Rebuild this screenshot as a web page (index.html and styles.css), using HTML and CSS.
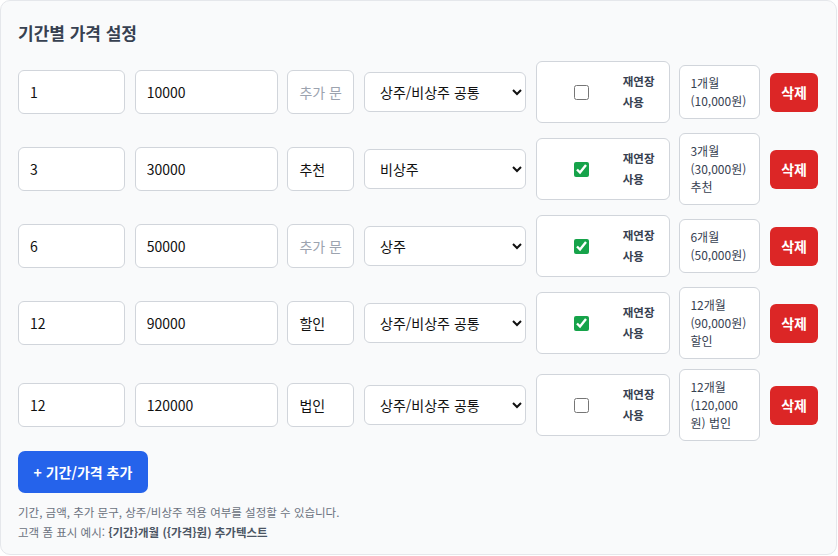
FILE: index.html
```html
<!DOCTYPE html>
<html lang="ko">
<head>
  <meta charset="UTF-8" />
  <title>기간별 가격 설정</title>
  <link rel="stylesheet" href="styles.css">
</head>
<body>
  <div class="panel">
    <h3>기간별 가격 설정</h3>

    <div class="rows">
      <div class="row">
        <input class="months" type="text" value="1" />
        <input class="price" type="text" value="10000" />
        <input class="extra" type="text" placeholder="추가 문구" />
        <select class="scope">
          <option selected>상주/비상주 공통</option>
          <option>상주</option>
          <option>비상주</option>
        </select>
        <label class="renew">
          <span class="check"><input type="checkbox" /></span>
          <span class="renew-text">재연장 사용</span>
        </label>
        <div class="preview">1개월 (10,000원)</div>
        <button class="del">삭제</button>
      </div>

      <div class="row">
        <input class="months" type="text" value="3" />
        <input class="price" type="text" value="30000" />
        <input class="extra" type="text" placeholder="추가 문구" value="추천" />
        <select class="scope">
          <option>상주/비상주 공통</option>
          <option>상주</option>
          <option selected>비상주</option>
        </select>
        <label class="renew">
          <span class="check"><input type="checkbox" checked /></span>
          <span class="renew-text">재연장 사용</span>
        </label>
        <div class="preview">3개월 (30,000원) 추천</div>
        <button class="del">삭제</button>
      </div>

      <div class="row">
        <input class="months" type="text" value="6" />
        <input class="price" type="text" value="50000" />
        <input class="extra" type="text" placeholder="추가 문구" />
        <select class="scope">
          <option>상주/비상주 공통</option>
          <option selected>상주</option>
          <option>비상주</option>
        </select>
        <label class="renew">
          <span class="check"><input type="checkbox" checked /></span>
          <span class="renew-text">재연장 사용</span>
        </label>
        <div class="preview">6개월 (50,000원)</div>
        <button class="del">삭제</button>
      </div>

      <div class="row">
        <input class="months" type="text" value="12" />
        <input class="price" type="text" value="90000" />
        <input class="extra" type="text" placeholder="추가 문구" value="할인" />
        <select class="scope">
          <option selected>상주/비상주 공통</option>
          <option>상주</option>
          <option>비상주</option>
        </select>
        <label class="renew">
          <span class="check"><input type="checkbox" checked /></span>
          <span class="renew-text">재연장 사용</span>
        </label>
        <div class="preview">12개월 (90,000원) 할인</div>
        <button class="del">삭제</button>
      </div>

      <div class="row">
        <input class="months" type="text" value="12" />
        <input class="price" type="text" value="120000" />
        <input class="extra" type="text" placeholder="추가 문구" value="법인" />
        <select class="scope">
          <option selected>상주/비상주 공통</option>
          <option>상주</option>
          <option>비상주</option>
        </select>
        <label class="renew">
          <span class="check"><input type="checkbox" /></span>
          <span class="renew-text">재연장 사용</span>
        </label>
        <div class="preview">12개월 (120,000원) 법인</div>
        <button class="del">삭제</button>
      </div>

      <div>
        <button class="add">+ 기간/가격 추가</button>
      </div>
    </div>

    <p class="help">
      기간, 금액, 추가 문구, 상주/비상주 적용 여부를 설정할 수 있습니다.<br />
      고객 폼 표시 예시: <b>{기간}개월 ({가격}원) 추가텍스트</b>
    </p>
  </div>
</body>
</html>
```

FILE: styles.css
```css
body {
  margin: 0;
  background: #fff;
  font-family: "Noto Sans CJK KR", "Noto Sans", sans-serif;
  color: #111;
}

.panel {
  width: 837px;
  box-sizing: border-box;
  background: #f9fafb;
  border: 1px solid #e5e7eb;
  border-radius: 10px;
  padding: 19px 15px 12px 17px;
}

h3 {
  margin: 0 0 16px;
  font-size: 17px;
  line-height: 25px;
  font-weight: 700;
  color: #374151;
}

.rows {
  display: flex;
  flex-direction: column;
  gap: 10px;
}

.row {
  display: flex;
  align-items: center;
  gap: 9.7px;
}

.row > * {
  flex-shrink: 0;
}

input[type="text"], select {
  font: inherit;
  font-size: 14px;
  color: #111;
  background: #fff;
  border: 1px solid #d1d5db;
  border-radius: 6px;
  box-sizing: border-box;
  height: 44px;
  padding: 0 11px;
  margin: 0;
}

input::placeholder {
  color: #9ca3af;
}

.months { width: 107px; }
.price { width: 143px; }
.extra { width: 67px; }

select.scope {
  width: 162px;
  height: 40px;
  padding-left: 11px;
}

/* checkbox + label box */
.renew {
  display: flex;
  align-items: center;
  width: 134px;
  box-sizing: border-box;
  background: #fff;
  border: 1px solid #d1d5db;
  border-radius: 6px;
  padding: 9px 10px;
}

.check {
  flex: 1;
  display: flex;
  justify-content: center;
  margin-right: 6px;
}

.check input {
  width: 15px;
  height: 15px;
  margin: 0;
  accent-color: #16a34a;
}

.renew-text {
  width: 36px;
  font-size: 11.5px;
  font-weight: 700;
  line-height: 21px;
  color: #374151;
}

.preview {
  width: 81px;
  box-sizing: border-box;
  background: #fff;
  border: 1px solid #d1d5db;
  border-radius: 6px;
  padding: 8px 10px;
  font-size: 12px;
  line-height: 18px;
  color: #374151;
}

button {
  font: inherit;
  border: none;
  border-radius: 6px;
  color: #fff;
  font-weight: 700;
  white-space: nowrap;
  cursor: pointer;
}

.del {
  background: #dc2626;
  height: 39px;
  padding: 0 11px;
  font-size: 14px;
}

.add {
  background: #2563eb;
  height: 42px;
  padding: 0 15.5px;
  font-size: 14px;
  border-radius: 7px;
}

.help {
  margin: 9px 0 0;
  font-size: 11.5px;
  line-height: 20px;
  color: #6b7280;
}

.help b {
  color: #4b5563;
}
```
